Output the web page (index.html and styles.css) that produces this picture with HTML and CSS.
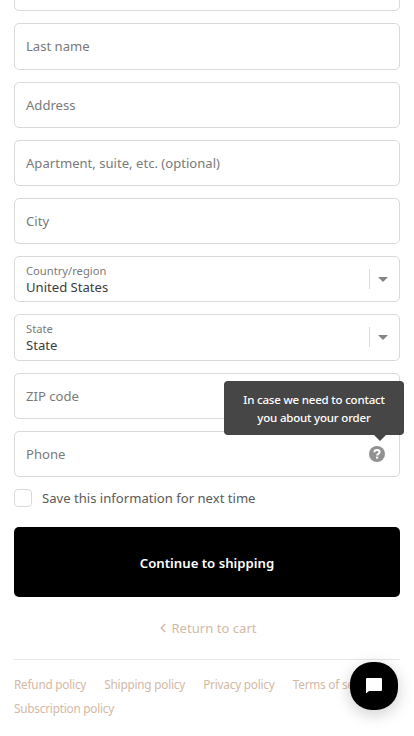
FILE: index.html
```
<!DOCTYPE html>
<html lang="en">
<head>
<meta charset="utf-8" />
<title>Checkout - Shipping</title>
<link rel="stylesheet" href="styles.css">
</head>

<body>
<div class="main">
	<form class="form">
		<div class="field"></div>
		<div class="field last-name"><span class="placeholder">Last name</span></div>
		<div class="field"><span class="placeholder">Address</span></div>
		<div class="field"><span class="placeholder">Apartment, suite, etc. (optional)</span></div>
		<div class="field"><span class="placeholder">City</span></div>
		<div class="field select">
			<div class="select-text">
				<span class="label">Country/region</span>
				<span class="value">United States</span>
			</div>
			<div class="caret"><svg width="10" height="5" viewBox="0 0 10 5"><path d="M0 0h10L5 5z" fill="#858585"/></svg></div>
		</div>
		<div class="field select">
			<div class="select-text">
				<span class="label">State</span>
				<span class="value">State</span>
			</div>
			<div class="caret"><svg width="10" height="5" viewBox="0 0 10 5"><path d="M0 0h10L5 5z" fill="#858585"/></svg></div>
		</div>
		<div class="field"><span class="placeholder">ZIP code</span></div>
		<div class="field phone">
			<span class="placeholder">Phone</span>
			<svg class="help" width="16" height="16" viewBox="0 0 16 16">
				<circle cx="8" cy="8" r="8" fill="#919191"/>
				<path d="M5.400 6.300C5.400 4.700 6.500 3.900 8 3.900s2.600.8 2.600 2.200c0 1.700-2.500 1.700-2.500 3.400" fill="none" stroke="#fff" stroke-width="2"/>
				<rect x="7" y="10.600" width="2.200" height="2" fill="#fff"/>
			</svg>
			<div class="tooltip"><span>In case we need to contact</span><span>you about your order</span></div>
		</div>
		<label class="save"><span class="checkbox"></span><span class="save-text">Save this information for next time</span></label>
		<button type="button" class="btn">Continue to shipping</button>
		<a class="return" href="#">
			<svg width="6" height="10" viewBox="0 0 6 10"><path d="M5.200 1L1.200 5l4 4" fill="none" stroke="#d3b9a5" stroke-width="1.400"/></svg>
			<span>Return to cart</span>
		</a>
	</form>
	<div class="footer">
		<a href="#">Refund policy</a>
		<a href="#">Shipping policy</a>
		<a href="#">Privacy policy</a>
		<a href="#">Terms of service</a>
		<a href="#">Subscription policy</a>
	</div>
</div>
<div class="chat">
	<svg width="16" height="16" viewBox="0 0 16 16"><path d="M1 0h14a1 1 0 0 1 1 1v11a1 1 0 0 1-1 1H3l-3 2.500V1a1 1 0 0 1 1-1z" fill="#fff"/></svg>
</div>
</body>
</html>
```
FILE: styles.css
```
*{box-sizing:border-box;}
body{margin:0;height:736px;overflow:hidden;background:#fff;font-family:"Noto Sans", "Open Sans", sans-serif;font-size:13.1px;color:#333;}
a{text-decoration:none;color:#d3b9a5;}
svg{display:block;}
.main{padding:0 14px;}
.form{margin-top:-34.74px;display:flex;flex-direction:column;}
.field{height:46.19px;margin-bottom:12px;padding:0 11px;border:1px solid #d9d9d9;border-radius:5px;display:flex;align-items:center;flex-shrink:0;white-space:nowrap;}
.last-name{padding-bottom:1px;}
.placeholder{color:#7a7a7a;line-height:18px;}
.select{justify-content:space-between;}
.select-text{display:flex;flex-direction:column;}
.label{font-size:11.2px;line-height:16px;color:#7a7a7a;}
.value{line-height:16px;color:#3c3c3c;}
.caret{height:20px;padding:1px 0 0 8px;border-left:1px solid #d9d9d9;display:flex;align-items:center;}

.phone{position:relative;justify-content:space-between;margin-bottom:0;}
.help{margin-right:3px;}
.tooltip{position:absolute;right:-5px;bottom:41px;width:180px;height:54px;border-radius:4px;background:#464646;color:#fff;font-size:11.5px;font-weight:500;letter-spacing:-.19px;line-height:18px;padding-top:2px;display:flex;flex-direction:column;align-items:center;justify-content:center;}
.tooltip:after{content:"";position:absolute;right:18px;bottom:-6px;border:6px solid transparent;border-bottom:0;border-top-color:#464646;}

.save{height:18px;margin-top:12px;display:flex;align-items:center;}
.checkbox{width:18px;height:18px;margin-right:10px;border:1px solid #d9d9d9;border-radius:4px;}
.save-text{color:#5a5a5a;}
.btn{height:70px;margin-top:20px;padding:2px 0 0;border:0;border-radius:5px;background:#000;color:#fff;font-family:inherit;font-size:13.2px;font-weight:600;}
.return{margin-top:22px;height:18px;padding-left:3px;display:flex;align-items:center;justify-content:center;gap:5px;}

.footer{margin-top:22px;padding-top:12px;border-top:1px solid #e6e6e6;display:flex;flex-wrap:wrap;column-gap:18.2px;font-size:11.8px;letter-spacing:-.23px;line-height:24px;}
.chat{position:absolute;left:350px;top:662px;width:48px;height:48px;border-radius:22px;background:#000;box-shadow:0 4px 16px rgba(0,0,0,.2);display:flex;align-items:center;justify-content:center;}
```
